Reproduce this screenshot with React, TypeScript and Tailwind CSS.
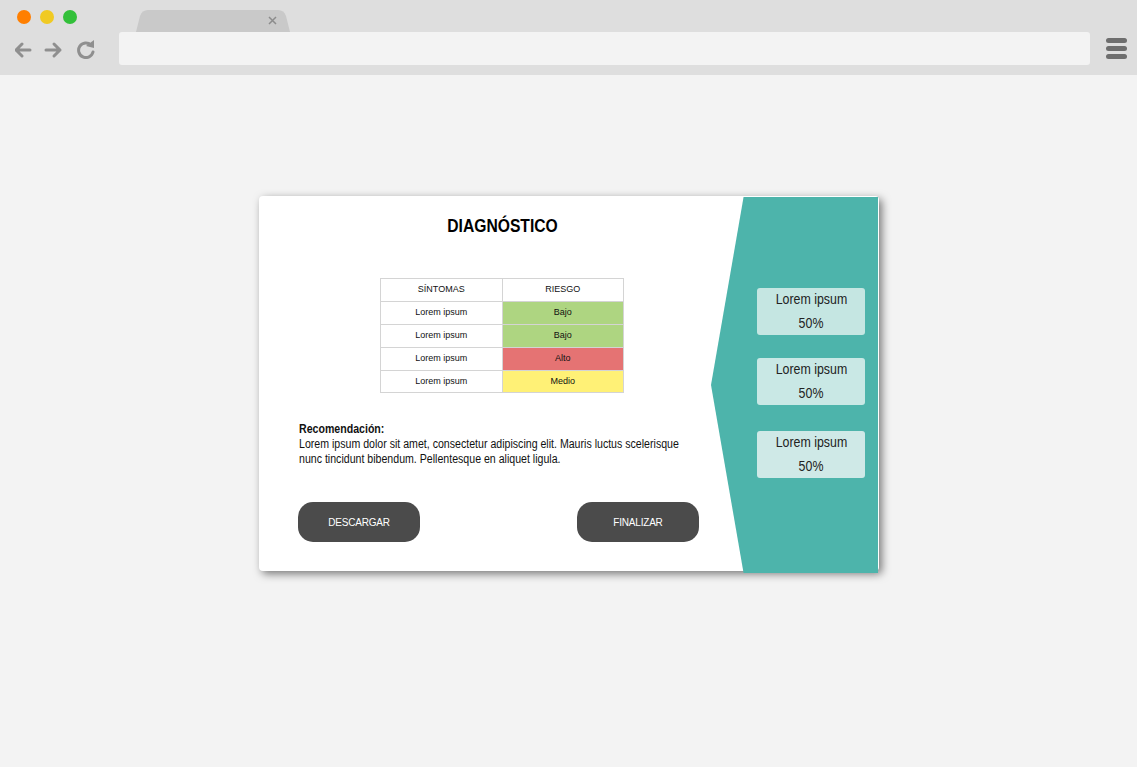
const rows = [
  { name: 'Lorem ipsum', risk: 'Bajo', color: 'bg-[#aed581]' },
  { name: 'Lorem ipsum', risk: 'Bajo', color: 'bg-[#aed581]' },
  { name: 'Lorem ipsum', risk: 'Alto', color: 'bg-[#e57373]' },
  { name: 'Lorem ipsum', risk: 'Medio', color: 'bg-[#fff176]' },
];

function TrafficDots() {
  return (
    <div className="flex gap-[9px] pl-[17px] pt-[10px]">
      <span className="size-[14px] rounded-full bg-[#ff7f00]" />
      <span className="size-[14px] rounded-full bg-[#f0ca23]" />
      <span className="size-[14px] rounded-full bg-[#33c03a]" />
    </div>
  );
}

function Tab() {
  return (
    <svg width="154" height="22" viewBox="0 0 154 22" className="ml-[59px] mt-[10px] block">
      <path d="M0 22 L4 6 Q6 0 12 0 L142 0 Q148 0 150 6 L154 22 Z" fill="#c9c9c9" />
      <path d="M133 7 L140 14 M140 7 L133 14" stroke="#8c8c8c" strokeWidth="1.5" fill="none" />
    </svg>
  );
}

function NavIcons() {
  return (
    <svg width="84" height="20" viewBox="0 0 84 20" className="block">
      <g fill="none" stroke="#8f8f8f" strokeWidth="3" strokeLinecap="round" strokeLinejoin="round">
        <path d="M1 11 H15 M7 5 L1 11 L7 17" />
        <path d="M31 11 H45 M39 5 L45 11 L39 17" />
        <path d="M76 6 A7.3 7.3 0 1 0 78 13" />
      </g>
      <path d="M71 7 L79 1 L79 9 Z" fill="#8f8f8f" />
    </svg>
  );
}

function StatBox({ tone, className = '' }: { tone: string; className?: string }) {
  return (
    <div
      className={`flex h-[47px] w-[108px] flex-col items-center gap-[2px] rounded-[3px] text-[14px] leading-[22px] text-[#222] ${tone} ${className}`}
    >
      <span className="scale-x-[0.885]">Lorem ipsum</span>
      <span className="scale-x-[0.885]">50%</span>
    </div>
  );
}

export default function App() {
  return (
    <div className="min-h-screen bg-[#f3f3f3] font-['Liberation_Sans',Arial,sans-serif] text-[#111]">
      <header className="h-[75px] bg-[#dedede]">
        <div className="flex h-[32px]">
          <TrafficDots />
          <Tab />
        </div>
        <div className="flex h-[33px] items-center">
          <div className="ml-[15px] w-[104px]">
            <NavIcons />
          </div>
          <div className="h-[33px] w-[971px] rounded-[3px] bg-[#f3f3f3]" />
          <div className="ml-[16px] flex w-[21px] flex-col gap-[3px]">
            <span className="h-[5px] rounded-full bg-[#6e6e6e]" />
            <span className="h-[5px] rounded-full bg-[#6e6e6e]" />
            <span className="h-[5px] rounded-full bg-[#6e6e6e]" />
          </div>
        </div>
      </header>

      <main className="pl-[259px] pt-[121px]">
        <section className="flex h-[375px] w-[620px] rounded-[4px] bg-white shadow-[3px_3px_8px_rgba(0,0,0,0.5)]">
          <div className="w-[452px]">
            <h1 className="mt-[19px] pl-[35px] text-center text-[18px] leading-[22px] font-bold text-black">
              <span className="inline-block scale-x-[0.87]">DIAGNÓSTICO</span>
            </h1>

            <table className="mt-[41px] ml-[121px] w-[244px] table-fixed border-collapse text-center text-[9px] text-[#111]">
              <thead>
                <tr className="h-[23px]">
                  <th className="border border-[#d4d4d4] font-normal">SÍNTOMAS</th>
                  <th className="border border-[#d4d4d4] font-normal">RIESGO</th>
                </tr>
              </thead>
              <tbody>
                {rows.map((row, i) => (
                  <tr key={i} className="h-[23px] last:h-[22px]">
                    <td className="border border-[#d4d4d4]">{row.name}</td>
                    <td className={`border border-[#d4d4d4] ${row.color}`}>{row.risk}</td>
                  </tr>
                ))}
              </tbody>
            </table>

            <div className="mt-[29px] ml-[40px] w-[440px] origin-left scale-x-[0.883] text-[12px] leading-[14.8px] text-[#111]">
              <p className="font-bold">Recomendación:</p>
              <p>
                Lorem ipsum dolor sit amet, consectetur adipiscing elit. Mauris luctus scelerisque nunc tincidunt
                bibendum. Pellentesque en aliquet ligula.
              </p>
            </div>

            <div className="mt-[36px] ml-[39px] flex w-[401px] justify-between">
              <button className="h-[40px] w-[122px] rounded-[15px] bg-[#4b4b4b] text-[10px] tracking-[-0.2px] text-white">DESCARGAR</button>
              <button className="h-[40px] w-[122px] rounded-[15px] bg-[#4b4b4b] text-[10px] tracking-[-0.2px] text-white">FINALIZAR</button>
            </div>
          </div>

          <aside className="mt-px h-[376px] w-[167px] shrink-0 bg-[#4db4ab] pl-[46px] pt-[91px] [clip-path:polygon(19.5%_0,100%_0,100%_100%,19.5%_100%,0_50%)]">
            <StatBox tone="bg-[#c5e6e2]" />
            <StatBox tone="bg-[#c9e8e5]" className="mt-[23px]" />
            <StatBox tone="bg-[#cfe9e7]" className="mt-[26px]" />
          </aside>
        </section>
      </main>
    </div>
  );
}
